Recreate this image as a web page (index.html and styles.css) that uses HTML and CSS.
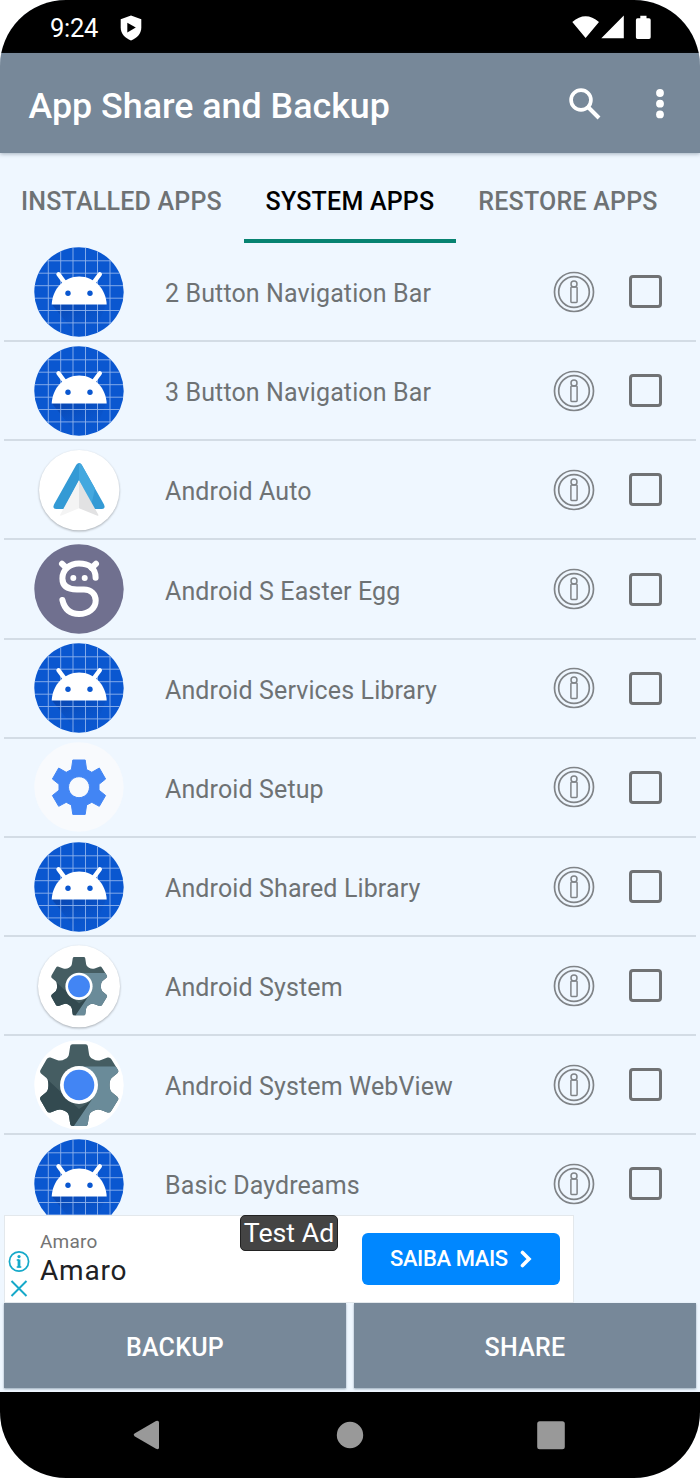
FILE: index.html
```html
<!DOCTYPE html>
<html lang="en">
<head>
<meta charset="utf-8">
<title>App Share and Backup</title>
<link rel="stylesheet" href="styles.css">
</head>
<body>
<svg class="defs" aria-hidden="true">
  <defs>
    <clipPath id="disc"><circle cx="46" cy="46" r="44.7"/></clipPath>
    <linearGradient id="headShade" x1="0" y1="0" x2="0.6" y2="1"><stop offset="0" stop-color="#0842a8" stop-opacity=".9"/><stop offset="1" stop-color="#0a57d0" stop-opacity="0"/></linearGradient>
    <path id="gearShape" d="M39.5 5.2H52.5Q54.5 5.2 54.8 7L56 15Q56.5 18.500 60 20Q64 22.500 68 21L74.500 18.600Q77 18 78.200 20L85 31Q86 33 84 34.500L78.500 39Q76.600 41 76.600 46T78.500 53L84 57.500Q86 59 85 61L78.200 72Q77 74 74.500 73.400L68 71Q64 69.500 60 72Q56.500 73.500 56 77L54.800 85Q54.500 87 52.500 87H39.500Q37.500 87 37.200 85L36 77Q35.500 73.500 32 72Q28 69.500 24 71L17.500 73.400Q15 74 13.800 72L7.500 61Q6.500 59 8 57.500L13.500 53Q15.400 51 15.400 46T13.500 39L8 34.500Q6.500 33 7.500 31L13.800 20Q15 18 17.500 18.600L24 21Q28 22.500 32 20Q35.500 18.500 36 15L37.200 7Q37.500 5.200 39.500 5.200Z"/>
    <clipPath id="gearClip"><use href="#gearShape"/></clipPath>
    <g id="gear">
      <g clip-path="url(#gearClip)">
        <path fill="#455d62" d="M0 0h92v92H0z"/>
        <path fill="#334a50" d="M15 41L46 70L58 62L40 90H0V55Z"/>
        <path fill="#6a8b99" d="M46 27.500H92V92H37.500L60 59Z"/>
      </g>
      <circle cx="46" cy="46" r="19" fill="#fff"/>
      <circle cx="46" cy="46" r="15.300" fill="#4285f4"/>
    </g>
    <symbol id="android" viewBox="0 0 92 92">
      <g clip-path="url(#disc)">
        <path fill="#0a57d0" d="M0 0h92v92H0z"/>
        <path fill="url(#headShade)" d="M19 58.500H73L60 92H46Z"/>
        <path fill="none" stroke="#8fb2ec" stroke-width=".9" d="M15.300 0v92M27.700 0v92M40 0v92M52.500 0v92M64.500 0v92M77 0v92M0 14.800h92M0 27.200h92M0 39.700h92M0 52.200h92M0 64.500h92M0 76.900h92"/>
      </g>
      <path fill="#fff" d="M18.700 58.600C19.300 43 31 30.500 46.200 30.500S73.100 43 73.700 58.600Z"/>
      <path fill="none" stroke="#fff" stroke-width="4.400" stroke-linecap="round" d="M25.500 28.200L32 37M66.800 28.200L60.300 37"/>
      <circle cx="35" cy="47.200" r="2.700" fill="#0a57d0"/><circle cx="57" cy="47.200" r="2.700" fill="#0a57d0"/>
    </symbol>
    <symbol id="auto" viewBox="0 0 92 92">
      <circle class="drop" cx="46.200" cy="46.100" r="40.200" fill="#fff"/>
      <path fill="#349ad5" d="M43.300 20.800Q46 17 48.700 20.800L71 60.500Q73 64.800 68.500 65H61L46 36.500L31 65H23.500Q19 64.800 21 60.500Z"/>
      <path fill="#43a8df" d="M46 19Q47.600 19 48.700 20.800L62 44.500L58.500 60L46 36.500Z"/>
      <path fill="#f4f4f4" d="M46 36.300V64.300L28.500 71.600Q26.500 72 27.300 70.500Z"/>
      <path fill="#e2e2e3" d="M46 36.300V64.300L63.800 71.600Q66 72 65.200 70.500Z"/>
    </symbol>
    <symbol id="egg" viewBox="0 0 92 92">
      <circle cx="46" cy="46" r="44.700" fill="#70708f"/>
      <g fill="none" stroke="#fff" stroke-width="6" stroke-linecap="round">
        <path d="M62.600 34.700C62.600 25 55.500 20.500 46 20.500S29.400 27 29.400 35.500S36 46.400 44 46.400H51C58 46.400 62.700 51.500 62.700 57.500C62.700 65.500 55.500 71 46 71S31.500 66 29.400 57"/>
        <path d="M29 20.800L33.500 25M63 20.800L58.500 25"/>
      </g>
      <circle cx="40.300" cy="35" r="3" fill="#fff"/><circle cx="51.700" cy="35" r="3" fill="#fff"/>
    </symbol>
    <symbol id="setup" viewBox="0 0 92 92">
      <circle cx="46" cy="46" r="44.700" fill="#f8fafd"/>
      <path fill="#4285f4" fill-rule="evenodd" stroke="#4285f4" stroke-linejoin="round" d="M39.800 19H52.200L53.600 28.600L58.800 31.300L66.300 27L72.600 38L66 43.300V49.200L72.600 54.500L66.300 65.300L58.800 61.300L53.600 64L52.200 73.400H39.800L38.400 64L33.200 61.300L25.700 65.300L19.400 54.500L26 49.200V43.300L19.400 38L25.700 27L33.200 31.300L38.400 28.600ZM46 35.700a10.500 10.500 0 1 0 .01 0Z"/>
    </symbol>
    <symbol id="system" viewBox="0 0 92 92">
      <circle class="drop" cx="46" cy="46.300" r="41" fill="#fff"/>
      <use href="#gear" transform="translate(13.100 13.400) scale(.715)"/>
    </symbol>
    <symbol id="webview" viewBox="0 0 92 92">
      <circle cx="46" cy="46" r="44.700" fill="#fff"/><use href="#gear"/>
    </symbol>
    <symbol id="info" viewBox="0 0 42 42">
      <g fill="none" stroke="#808488" stroke-width="1.500">
        <circle cx="21" cy="21" r="19.500" stroke-width="1.700"/><circle cx="21" cy="21" r="15.300" stroke-width="1.700"/>
        <circle cx="21" cy="12.900" r="3"/><rect x="17.900" y="16" width="6.200" height="15.400" rx=".8"/>
      </g>
    </symbol>
  </defs>
</svg>

<div class="phone">
  <div class="status">
    <span class="clock">9:24</span>
    <svg class="shield" viewBox="0 0 22 26"><path fill="#fff" d="M11 .5L21.300 4.300V12.500C21.300 18.500 17 23.300 11 25.400C5 23.300.7 18.500.7 12.500V4.300Z"/><path d="M7.300 7.700V17.500L15.800 12.600Z"/></svg>
    <svg class="signals" viewBox="0 0 80 26"><path fill="#fff" d="M.3 7Q13.500-4.500 27 7L13.600 23ZM29.300 23.200L51.800.5V23.200ZM65.500 3.300H68.300V.8H74.500V3.300H77Q78.700 3.300 78.700 5V22.300Q78.700 24 77 24H65.500Q63.900 24 63.900 22.300V5Q63.900 3.300 65.500 3.300Z"/></svg>
  </div>
  <header class="toolbar">
    <h1 class="title">App Share and Backup</h1>
    <svg class="search" viewBox="0 0 32 32"><circle cx="12" cy="12" r="9.900" fill="none" stroke="#fff" stroke-width="3.700"/><path fill="none" stroke="#fff" stroke-width="4" d="M19 19L30 30"/></svg>
    <svg class="more" viewBox="0 0 8 30"><g fill="#fff"><circle cx="4" cy="4" r="3.900"/><circle cx="4" cy="14.700" r="3.900"/><circle cx="4" cy="25.400" r="3.900"/></g></svg>
  </header>
  <nav class="tabs">
    <span class="tab tab-installed">INSTALLED APPS</span>
    <span class="tab tab-system">SYSTEM APPS</span>
    <span class="tab tab-restore">RESTORE APPS</span>
  </nav>
  <main class="list">
    <div class="row"><svg class="app"><use href="#android"/></svg><span class="name">2 Button Navigation Bar</span><svg class="info"><use href="#info"/></svg><span class="check"></span></div>
    <div class="row"><svg class="app"><use href="#android"/></svg><span class="name">3 Button Navigation Bar</span><svg class="info"><use href="#info"/></svg><span class="check"></span></div>
    <div class="row"><svg class="app"><use href="#auto"/></svg><span class="name">Android Auto</span><svg class="info"><use href="#info"/></svg><span class="check"></span></div>
    <div class="row"><svg class="app"><use href="#egg"/></svg><span class="name">Android S Easter Egg</span><svg class="info"><use href="#info"/></svg><span class="check"></span></div>
    <div class="row"><svg class="app"><use href="#android"/></svg><span class="name">Android Services Library</span><svg class="info"><use href="#info"/></svg><span class="check"></span></div>
    <div class="row"><svg class="app"><use href="#setup"/></svg><span class="name">Android Setup</span><svg class="info"><use href="#info"/></svg><span class="check"></span></div>
    <div class="row"><svg class="app"><use href="#android"/></svg><span class="name">Android Shared Library</span><svg class="info"><use href="#info"/></svg><span class="check"></span></div>
    <div class="row"><svg class="app"><use href="#system"/></svg><span class="name">Android System</span><svg class="info"><use href="#info"/></svg><span class="check"></span></div>
    <div class="row"><svg class="app"><use href="#webview"/></svg><span class="name">Android System WebView</span><svg class="info"><use href="#info"/></svg><span class="check"></span></div>
    <div class="row"><svg class="app"><use href="#android"/></svg><span class="name">Basic Daydreams</span><svg class="info"><use href="#info"/></svg><span class="check"></span></div>
  </main>
  <section class="ad">
    <svg class="ad-icons" viewBox="0 0 22 48"><g fill="none" stroke="#16a9c9" stroke-width="1.700"><circle cx="11" cy="11.500" r="9.600"/><path stroke-width="2" d="M3.500 31L18.500 46M18.500 31L3.500 46"/><path stroke-width="2.800" d="M11 9.500V17.500"/><path stroke-width="1.400" d="M8.700 10H11M8.700 17H13.300"/></g><circle cx="11" cy="6.600" r="1.600" fill="#16a9c9"/></svg>
    <div class="ad-copy"><span class="ad-sub">Amaro</span><span class="ad-name">Amaro</span></div>
    <span class="ad-badge">Test Ad</span>
    <div class="cta"><span class="cta-text">SAIBA MAIS</span><svg class="chevron" viewBox="0 0 12 18"><path fill="none" stroke="#fff" stroke-width="3.600" stroke-linecap="round" d="M2.500 2.500L9 9L2.500 15.500"/></svg></div>
  </section>
  <div class="actions"><div class="action"><span class="backup">BACKUP</span></div><div class="action"><span class="share">SHARE</span></div></div>
  <footer class="navbar">
    <svg class="nav-icon" viewBox="0 0 30 30"><path fill="#999" d="M2.500 13.500L24 .9Q27 0 27 2.500V27.500Q27 30 24 28.700L2.500 16.200Q.8 14.900 2.500 13.500Z"/></svg>
    <svg class="nav-icon" viewBox="0 0 30 30"><circle cx="16" cy="15" r="13.200" fill="#999"/></svg>
    <svg class="nav-icon" viewBox="0 0 30 30"><rect x="1.200" y="1.200" width="27.600" height="28" rx="2.500" fill="#999"/></svg>
  </footer>
</div>
</body>
</html>
```

FILE: styles.css
```css
* { box-sizing: border-box; }
body { margin: 0; background: #fff; font-family: Roboto, "Liberation Sans", sans-serif; }
svg { display: block; flex: none; }
.defs { position: absolute; width: 0; height: 0; }
.phone { width: 700px; height: 1478px; display: flex; flex-direction: column; background: #eff7ff; border-radius: 66px; overflow: hidden; }
.status { flex: none; height: 53.3px; background: #000; display: flex; align-items: center; padding: 3px 48px 0 50px; }
.clock { color: #fff; font-size: 25.500px; line-height: 30px; letter-spacing: -.25px; width: 69.500px; white-space: nowrap; }
.shield { width: 22px; height: 26px; }
.signals { width: 80px; height: 26px; margin-left: auto; }
.toolbar { flex: none; height: 99.700px; background: #778899; display: flex; align-items: center; padding: 1px 36px 0 28.500px; box-shadow: 0 1px 4px rgba(50,70,90,.4); }
.title { margin: 5px auto 0 0; color: #fff; font-size: 35.800px; font-weight: 500; line-height: 42px; white-space: nowrap; }
.search { width: 32px; height: 32px; margin-right: 55px; }
.more { width: 8px; height: 30px; margin-right: 0; }
.tabs { flex: none; height: 90px; display: flex; padding-top: 1px; }
.tab { display: flex; justify-content: center; align-items: center; padding-top: 6px; height: 89px; font-size: 25px; font-weight: 500; letter-spacing: .22px; color: #6e7274; white-space: nowrap; }
.tab-installed { width: 243px; margin-right: 1px; }
.tab-system { width: 212px; color: #000; border-bottom: 4px solid #078371; padding-top: 10px; }
.tab-restore { width: 224px; }
.list { flex: none; height: 972px; overflow: hidden; margin: 0 4px; }
.row { height: 99.170px; display: flex; align-items: center; border-bottom: 2px solid #d3dce5; padding: 0 34px 0 29px; }
.app { width: 92px; height: 92px; overflow: visible; }
.drop { filter: drop-shadow(0 1.500px 1px rgba(0,0,0,.3)); }
.name { margin: 5px auto 0 40px; font-size: 25px; letter-spacing: .12px; line-height: 30px; color: #6e7274; white-space: nowrap; }
.info { width: 42px; height: 42px; margin-right: 34px; }
.check { width: 33px; height: 33px; border: 3.500px solid #707274; border-radius: 4px; }
.ad { flex: none; position: relative; width: 570px; height: 88px; margin-left: 4px; background: #fff; border: 1px solid #e3e8ec; display: flex; align-items: center; padding: 0 13px 0 3px; }
.ad-icons { width: 22px; height: 48px; margin-top: 30px; }
.ad-copy { display: flex; flex-direction: column; margin: 0 auto 0 10px; }
.ad-sub { font-size: 19px; line-height: 24px; letter-spacing: .2px; color: #747474; }
.ad-name { font-size: 28px; line-height: 34px; letter-spacing: .8px; color: #202124; }
.ad-badge { position: absolute; left: 235px; top: -1px; width: 98px; height: 36px; border: 1px solid #222; border-radius: 5px; background: #444; color: #fff; font-size: 26.700px; line-height: 35px; text-align: center; white-space: nowrap; }
.cta { width: 198px; height: 52px; border-radius: 6px; background: #0087ff; display: flex; align-items: center; padding-left: 28px; }
.cta-text { color: #fff; font-size: 22px; font-weight: 500; letter-spacing: -.4px; width: 130px; white-space: nowrap; }
.chevron { width: 12px; height: 18px; }
.actions { flex: none; height: 89.500px; display: flex; gap: 8px; padding: 0 4px 4.500px; }
.action { flex: 1; background: #778899; color: #fff; display: flex; align-items: center; justify-content: center; font-size: 25px; letter-spacing: .25px; font-weight: 500; padding-top: 4px; box-shadow: 0 1px 2px rgba(60,85,110,.5); }
.navbar { flex: 1; background: #000; display: flex; justify-content: space-between; padding: 27.500px 134px 0 132px; }
.nav-icon { width: 30px; height: 30px; }
```
